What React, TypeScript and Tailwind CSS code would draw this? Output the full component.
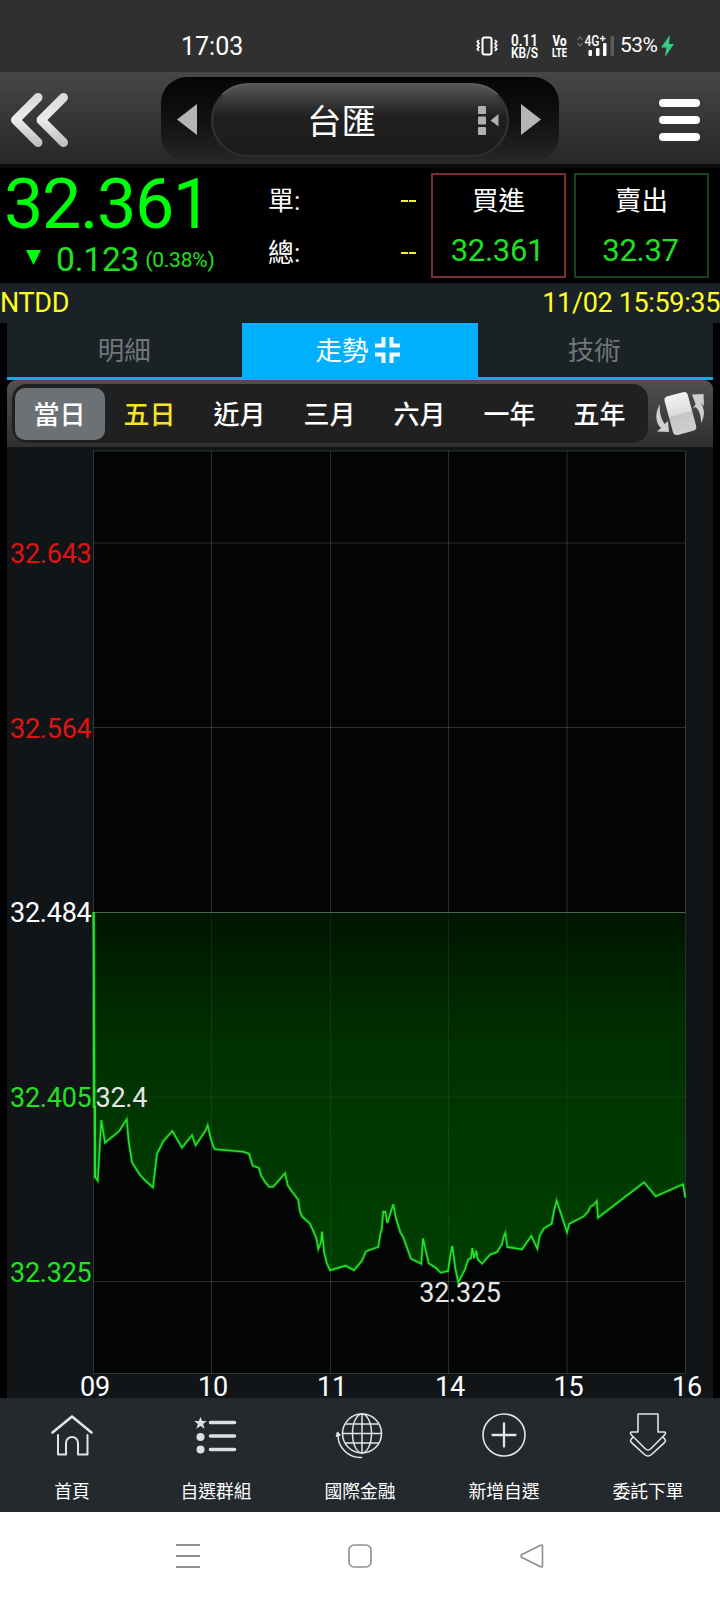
import clsx from "clsx";
import type { ReactNode } from "react";

type Point = [number, number];

const ranges = ["當日", "五日", "近月", "三月", "六月", "一年", "五年"];

// ------- chart data (svg units) -------
const points: Point[] = [
    [93.5, 912], [95, 1177], [97.7, 1180.7], [101.3, 1120], [105, 1142.7], [119.3, 1131], [126.7, 1119.3],
    [128.7, 1141.7], [132, 1162.3], [139.3, 1174], [145.3, 1180.7], [153, 1187.3], [157, 1154], [163.3, 1141.3],
    [172.3, 1131], [182, 1147.7], [192, 1135.3], [195.7, 1145.3], [206, 1130], [207.7, 1125.3], [210.7, 1138.3],
    [213.3, 1146.7], [215, 1149.3], [243.3, 1151.7], [249, 1153.7], [252.7, 1165.7], [259, 1168], [261, 1175.3],
    [265, 1182], [269, 1186.7], [273.3, 1186.7], [285, 1173.3], [288, 1186], [298.3, 1200], [300, 1211.7],
    [302.3, 1216.7], [310, 1223.7], [316.3, 1238], [318.3, 1249], [321, 1242.3], [322, 1231.7], [324, 1251.7],
    [326.7, 1262.7], [330, 1270.3], [345.7, 1265.7], [354, 1270.3], [361.7, 1261], [366, 1251.3], [378.3, 1247],
    [380.3, 1234.3], [381.7, 1229.3], [383.3, 1211.7], [385.3, 1212], [387.3, 1223], [393.3, 1204.3],
    [396, 1218.3], [400.3, 1232.3], [403, 1236.7], [411, 1258.7], [421.3, 1263.7], [423, 1238.3], [425.7, 1250.7],
    [428.7, 1263.3], [436, 1268], [440.7, 1272.7], [448, 1271], [450.7, 1253.3], [452.3, 1246], [455.3, 1268.3],
    [458.3, 1282.3], [464.7, 1270], [468.3, 1259.3], [471, 1258.3], [472.3, 1248], [474, 1258.3], [476.3, 1250.7],
    [477.7, 1259.3], [482, 1263.7], [490, 1254.7], [497, 1252], [502, 1244.3], [503.7, 1236.7], [505.3, 1233],
    [507.3, 1247], [522, 1249.3], [531.3, 1236], [537.3, 1248.7], [539.7, 1235.7], [544, 1228.3], [551.7, 1223.7],
    [554, 1210.7], [556.7, 1200.7], [567, 1232.3], [569.3, 1223.7], [583.3, 1216.7], [588, 1211.7],
    [590.7, 1206.3], [593.3, 1205.3], [596.7, 1201], [598, 1217.7], [644, 1182.3], [655.7, 1196.3],
    [683, 1184.3], [685.3, 1197.7],
];

const gridX = [93.5, 211.5, 330.5, 448.5, 567, 685.5];
const gridY = [451, 543, 727.5, 1097, 1281.5, 1373.5];
const hours = ["09", "10", "11", "14", "15", "16"];

const priceLabels = [
    { text: "32.643", y: 563, fill: "#e01212" },
    { text: "32.564", y: 737.5, fill: "#e01212" },
    { text: "32.484", y: 922, fill: "#ffffff" },
    { text: "32.405", y: 1107, fill: "#22e222" },
    { text: "32.325", y: 1282, fill: "#22e222" },
];

function StatusBar() {
    return (
        <div className="flex h-[72px] items-start bg-[#303030] text-white">
            <span className="ml-[181px] mt-[33px] w-[294px] text-[25px] leading-[28px]">17:03</span>
            <svg className="mt-[36px]" width="24" height="20" fill="none" stroke="#fff">
                <rect x="7.500" y="1.500" width="9" height="17" rx="2" strokeWidth="2" />
                <path d="M4 4 2.300 5.800 4 7.600 2.300 9.400l1.700 1.800L2.300 13l1.700 1.800M20 4l1.700 1.800L20 7.600l1.700 1.800-1.700 1.800 1.700 1.800-1.700 1.800" strokeWidth="1.700" />
            </svg>
            <svg className="ml-[12px] mt-[33px] overflow-visible" width="28" height="26" fill="#fff" fontWeight="600">
                <text x="0" y="13" fontSize="17" textLength="27" lengthAdjust="spacingAndGlyphs">0.11</text>
                <text x="0" y="25" fontSize="14" textLength="27" lengthAdjust="spacingAndGlyphs">KB/S</text>
            </svg>
            <svg className="ml-[13px] mt-[33px] overflow-visible" width="16" height="26" fill="#fff" fontWeight="800">
                <text x="0.500" y="13" fontSize="14.500" textLength="14" lengthAdjust="spacingAndGlyphs">Vo</text>
                <text x="0" y="23.500" fontSize="13.500" textLength="15" lengthAdjust="spacingAndGlyphs">LTE</text>
            </svg>
            <svg className="ml-[8px] mt-[34px]" width="40" height="24" fill="#fff">
                <path d="m1.500 6 2.500-3 2.500 3M1.500 9 4 12l2.500-3" fill="none" stroke="#666" strokeWidth="1.300" />
                <text x="8.500" y="11.500" fontSize="14" fontWeight="500" textLength="15" lengthAdjust="spacingAndGlyphs">4G</text>
                <path d="M24 4.500h5.500M26.700 1.700v5.600" stroke="#fff" strokeWidth="1.400" />
                <rect x="12.500" y="16" width="3.500" height="6" rx="1" />
                <rect x="20" y="14" width="3.500" height="8" rx="1" />
                <rect x="27" y="9" width="3.500" height="13" rx="1" />
                <rect x="34.500" y="2" width="3.500" height="20" rx="1" fill="#5c5c5c" />
            </svg>
            <span className="ml-[4px] mt-[33px] w-[41px] text-[21px] leading-[25px] tracking-[-0.500px]">53%</span>
            <svg className="mt-[35px]" width="13" height="23">
                <path d="M9 0 0 12.500h5.500L4 22 13 9H8z" fill="#30cf85" />
            </svg>
        </div>
    );
}

function Header() {
    return (
        <header className="flex h-[96px] items-start border-b-4 border-[#0b0b0b] bg-linear-to-b from-[#474747] to-[#272727]">
            <svg className="shrink-0" width="161" height="92" fill="none" strokeLinecap="round" strokeLinejoin="round">
                <defs>
                    <linearGradient id="back" x1="0" y1="21" x2="0" y2="74" gradientUnits="userSpaceOnUse">
                        <stop offset="0" stopColor="#d8d8d8" />
                        <stop offset=".5" stopColor="#ececec" />
                        <stop offset="1" stopColor="#bdbdbd" />
                    </linearGradient>
                </defs>
                <path d="M38 25.500 15.500 48 38 70.500M63.500 25.500 41 48l22.500 22.500" stroke="url(#back)" strokeWidth="9" />
            </svg>
            <div className="mt-[5px] flex h-[84px] w-[398px] items-center rounded-[26px] bg-linear-to-b from-[#050505] via-[#111] to-[#262626]">
                <svg className="ml-[15px] mt-[2px]" width="21" height="32" fill="#b5b5b5">
                    <path d="M21 0v31L1 15.500z" />
                </svg>
                <div className="ml-[14px] mt-[1px] flex h-[74px] w-[298px] items-center rounded-full border-2 border-t-[#5a5a5a] border-r-[#343434] border-b-[#2d2d2d] border-l-[#343434] bg-linear-to-b from-[#555] via-[#202020] via-45% to-[#1b1b1b]">
                    <span className="ml-[94px] mt-[4px] w-[70px] text-[34.5px] leading-[40px] text-white">台匯</span>
                    <svg className="ml-[101px] mt-[1px]" width="24" height="32" fill="#b0b0b0">
                        <rect x="0" y="2" width="8" height="8" rx="1" />
                        <rect x="0" y="12.500" width="8" height="8" rx="1" />
                        <rect x="0" y="23" width="8" height="8" rx="1" />
                        <path d="M20.500 10v12.500l-8-6z" />
                    </svg>
                </div>
                <svg className="ml-[12px] mt-[2px]" width="21" height="32" fill="#b5b5b5">
                    <path d="M0 0v31l20-15.500z" />
                </svg>
            </div>
            <div className="ml-[100px] mt-[27px] flex w-[41px] flex-col gap-[9px]">
                <i className="h-[8px] rounded-full bg-white" />
                <i className="h-[8px] rounded-full bg-white" />
                <i className="h-[8px] rounded-full bg-white" />
            </div>
        </header>
    );
}

function QuoteBox({ label, value, className }: { label: string; value: string; className: string }) {
    return (
        <div className={clsx("mt-[5px] h-[105px] w-[135px] border-2 text-center", className)}>
            <div className="mt-[6px] text-[26.5px] leading-[40px] text-white">{label}</div>
            <div className="mt-[10px] pr-[2px] text-[31px] leading-[40px] tracking-[-0.300px] text-[#20e020]">{value}</div>
        </div>
    );
}

function Quote() {
    return (
        <section className="flex h-[115px] bg-black">
            <div className="w-[268px]">
                <div className="ml-[4px] h-[73px] text-[70px] leading-[73px] tracking-[-1.400px] text-[#00ff0a]">32.361</div>
                <div className="mt-px flex items-center text-[#20e020]">
                    <svg className="ml-[26px] mt-[-5px]" width="15" height="15">
                        <path d="M0 0h15L7.500 15z" fill="#00ff0a" />
                    </svg>
                    <span className="ml-[15px] text-[33.5px] leading-[36px] tracking-[-0.200px]">0.123</span>
                    <span className="ml-[6px] text-[21px] leading-[32px] tracking-[-0.200px]">(0.38%)</span>
                </div>
            </div>
            <div className="w-[150px] pt-[13px] text-[26px] leading-[40px] text-white">
                {["單:", "總:"].map((label) => (
                    <div key={label} className="mb-[12px] flex h-[40px] justify-between">
                        <span>{label}</span>
                        <span className="flex gap-[1px] pr-[2px] pt-[19px]">
                            <i className="h-[2px] w-[7px] bg-[#f5f520]" />
                            <i className="h-[2px] w-[7px] bg-[#f5f520]" />
                        </span>
                    </div>
                ))}
            </div>
            <div className="ml-[13px] flex gap-[8px]">
                <QuoteBox label="買進" value="32.361" className="border-[#7b302f]" />
                <QuoteBox label="賣出" value="32.37" className="border-[#17451b]" />
            </div>
        </section>
    );
}

function Tabs() {
    return (
        <nav className="mx-[7px] grid h-[57px] grid-cols-3 border-b-[3px] border-[#18a9ea] bg-[#1b2226] text-[26.5px] leading-[50px] text-[#70777b]">
            <div className="pt-[3px] pr-[1px] text-center">明細</div>
            <div className="mb-[-3px] flex items-start justify-center gap-[7px] bg-[#00b0ff] pt-[3px] pr-[4px] text-white">
                <span>走勢</span>
                <svg className="mt-[11px]" width="25" height="26" fill="none" stroke="#effaff" strokeWidth="4">
                    <path d="M0 8.500h8.500V0M16.500 0v8.500H25M0 17.500h8.500V26M16.500 26v-8.500H25" />
                </svg>
            </div>
            <div className="pt-[3px] pr-[2px] text-center">技術</div>
        </nav>
    );
}

function RangeBar() {
    return (
        <div className="mx-[7px] flex h-[67px] items-center rounded-t-[9px] bg-linear-to-b from-[#505050] to-[#303030]">
            <div className="ml-[5px] flex h-[59px] w-[636px] items-center rounded-[15px] bg-[#202020] px-[3px]">
                {ranges.map((label, i) => (
                    <button
                        key={label}
                        className={clsx(
                            "h-[52px] w-[90px] rounded-[10px] pr-px pt-[3px] text-[26px] font-medium",
                            i === 0 && "bg-[#6c7175]",
                            i === 1 ? "text-[#f5e229]" : "text-white"
                        )}
                    >
                        {label}
                    </button>
                ))}
            </div>
            <svg className="ml-[7px]" width="50" height="48" fill="#cfcfcf">
                <defs>
                    <linearGradient id="card" x1="0" y1="0" x2="0" y2="1">
                        <stop offset="0" stopColor="#f4f4f4" />
                        <stop offset=".5" stopColor="#dcdcdc" />
                        <stop offset=".52" stopColor="#c6c6c6" />
                        <stop offset="1" stopColor="#cfcfcf" />
                    </linearGradient>
                </defs>
                <rect x="13.500" y="3.500" width="24" height="40" rx="4" fill="url(#card)" transform="rotate(-15 25.500 24)" />
                <path d="M5 14C-1 24 1 34 6 38l-4 3.500 12 .5-1-11-3.500 3C6 29 4 22 5 14z" />
                <path d="M37 4.500 48.500 4l.500 12-3.500-3.500C50 19 50 26 46 33c0-7-1-12-5.500-16L37 19c2-2 3-3 3.500-5z" />
            </svg>
        </div>
    );
}

function Chart() {
    const line = points.map(([x, y]) => `${x},${y}`).join(" ");

    return (
        <div className="mx-[7px] h-[951px] bg-[#111518]">
            <svg className="overflow-visible" width="706" height="951" viewBox="7 447 706 951" fontSize="27" letterSpacing="-0.25">
                <defs>
                    <linearGradient id="area" x1="0" y1="912" x2="0" y2="1282" gradientUnits="userSpaceOnUse">
                        <stop offset="0" stopColor="#001500" />
                        <stop offset=".3" stopColor="#002d00" />
                        <stop offset=".6" stopColor="#003800" />
                        <stop offset="1" stopColor="#003f00" />
                    </linearGradient>
                </defs>
                <rect x="93.500" y="451" width="592" height="922.500" fill="#030504" />
                <polygon points={`${line} 685.5,912`} fill="url(#area)" />
                <g stroke="#fff" strokeOpacity=".16">
                    {gridX.map((x) => (
                        <path key={x} d={`M${x} 451V1373.5`} />
                    ))}
                    {gridY.map((y) => (
                        <path key={y} d={`M93.5 ${y}H685.5`} />
                    ))}
                </g>
                {/* keep the filled area free of bright grid lines */}
                <polygon points={`${line} 685.5,913`} fill="url(#area)" fillOpacity=".6" />
                <path d="M94 912.500H685.500" stroke="#4b6457" />
                <polyline points={line} fill="none" stroke="#1b8a1b" strokeOpacity=".4" strokeWidth="3.500" />
                <polyline points={line} fill="none" stroke="#20e626" strokeWidth="1.600" />
                <path d="M93.700 912V1108M95 1106V1178" stroke="#20e626" strokeWidth="2" />

                {priceLabels.map((l) => (
                    <text key={l.text} x="91.500" y={l.y} fill={l.fill} textAnchor="end">
                        {l.text}
                    </text>
                ))}
                <text x="95.500" y="1107" fill="#e6e6e6">32.4</text>
                <text x="460" y="1302" fill="#e6e6e6" textAnchor="middle">32.325</text>
                {hours.map((h, i) => (
                    <text key={h} x={gridX[i] + 1.5} y="1396" fill="#fff" textAnchor="middle">
                        {h}
                    </text>
                ))}
            </svg>
        </div>
    );
}

function NavItem({ label, children }: { label: string; children: ReactNode }) {
    return (
        <div className="flex flex-col items-center">
            <svg className="mt-[12px]" width="50" height="50" fill="none" stroke="#e2e4e5" strokeWidth="2" strokeLinecap="round" strokeLinejoin="round">
                {children}
            </svg>
            <span className="mt-[19px] text-[17.8px] leading-[26px] text-white">{label}</span>
        </div>
    );
}

function BottomNav() {
    return (
        <nav className="grid h-[114px] grid-cols-5 bg-[#24292d]">
            <NavItem label="首頁">
                <path d="M5.500 22.500 25 6.500l19.500 16" strokeWidth="2.600" />
                <path d="M11 25v19.500h8V33a6 6 0 0 1 12 0v11.500h9.500V25" />
            </NavItem>
            <NavItem label="自選群組">
                <g fill="#dddfe0" stroke="none">
                    <path d="m9.500 7 1.700 4h4.600l-3.600 3 1.400 4.700-4.100-2.700-4.100 2.700L6.800 14l-3.600-3h4.600z" />
                    <circle cx="9.500" cy="27" r="4" />
                    <circle cx="9.500" cy="39.500" r="4" />
                </g>
                <path d="M19.500 12.500h24M19.500 26h24M19.500 39.500h24" stroke="#dddfe0" strokeWidth="3.600" />
            </NavItem>
            <NavItem label="國際金融">
                <g strokeWidth="1.500">
                    <circle cx="27" cy="23.500" r="19.500" />
                    <ellipse cx="27" cy="23.500" rx="9.500" ry="19.500" />
                    <path d="M27 4v39M7.500 23.500h39M10.500 14h33M10.500 33h33" />
                    <path d="M3 25c0 13 10.500 23 23.500 22.500M1.500 26 2.500 22.500 5 25z" />
                </g>
            </NavItem>
            <NavItem label="新增自選">
                <circle cx="25" cy="25" r="21" strokeWidth="1.600" />
                <path d="M25 13.500v23M13.500 25h23" strokeWidth="2.300" />
            </NavItem>
            <NavItem label="委託下單">
                <g strokeWidth="1.600">
                    <path d="M15 4h20v18h6c1.500 0 2 1 1 2.500L28 38.500q-3 3-6 0L8 24.500C7 23 7.500 22 9 22h6z" />
                    <path d="M9.500 27.500 8 29.500c-.8 1-.5 2 .3 2.800L21.500 44.500q3.500 3 7 0l13.200-12.200c.8-.8 1.100-1.800.3-2.800l-1.500-2" />
                </g>
            </NavItem>
        </nav>
    );
}

function SystemNav() {
    return (
        <div className="flex h-[88px] items-center justify-center gap-[148px] bg-white">
            <svg width="24" height="26" stroke="#8d8d8d" strokeWidth="2">
                <path d="M0 2h24M0 13h24M0 24h24" />
            </svg>
            <svg width="24" height="26" fill="none" stroke="#8d8d8d" strokeWidth="1.600">
                <rect x="1" y="2" width="22" height="22" rx="5" />
            </svg>
            <svg width="24" height="26" fill="none" stroke="#8d8d8d" strokeWidth="1.600" strokeLinejoin="round">
                <path d="M20.500 2.200 2 11.500q-2 1.500 0 3l18.500 9.300q2 .7 2-1.300v-19q0-2-2-1.300z" />
            </svg>
        </div>
    );
}

export default function App() {
    return (
        <main className="h-[1600px] w-[720px] overflow-hidden bg-black font-[Roboto,'Noto_Sans_CJK_TC',sans-serif]">
            <StatusBar />
            <Header />
            <Quote />
            <div className="flex h-[40px] justify-between bg-[#1b2226] text-[27px] leading-[40px] tracking-[-0.350px] text-[#ffff24]">
                <span>NTDD</span>
                <span>11/02 15:59:35</span>
            </div>
            <Tabs />
            <RangeBar />
            <Chart />
            <BottomNav />
            <SystemNav />
        </main>
    );
}
